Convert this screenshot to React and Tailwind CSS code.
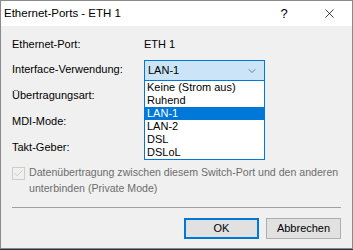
import { Check, ChevronDown, X } from "lucide-react";

const options = ["Keine (Strom aus)", "Ruhend", "LAN-1", "LAN-2", "DSL", "DSLoL"];

export default function App() {
    return (
        <div className="w-[353px] h-[250px] bg-[#2b2f3a] overflow-hidden" style={{ fontFamily: '"Liberation Sans", Arial, sans-serif' }}>
            <div className="w-[353px] h-[249px] bg-[#f0f0f0] border border-[#8a8a8a] flex flex-col text-[11px] text-black">
                {/* Titelleiste */}
                <div className="h-[25px] bg-white flex items-center pl-[3px]">
                    <span className="text-[11.5px] flex-1">Ethernet-Ports - ETH 1</span>
                    <span className="w-[44px] text-center text-[13px]">?</span>
                    <span className="w-[46px] flex justify-center">
                        <X size={15} strokeWidth={1.2} />
                    </span>
                </div>

                <div className="relative flex-1 px-[11px]">
                    <div className="grid grid-cols-[132px_1fr] mt-[10px]">
                        <div className="h-[16px] leading-[16px]">Ethernet-Port:</div>
                        <div className="h-[16px] leading-[16px]">ETH 1</div>
                    </div>
                    <div className="flex flex-col gap-[10px] mt-[9px]">
                        <div className="h-[16px] leading-[16px]">Interface-Verwendung:</div>
                        <div className="h-[16px] leading-[16px]">Übertragungsart:</div>
                        <div className="h-[16px] leading-[16px]">MDI-Mode:</div>
                        <div className="h-[16px] leading-[16px]">Takt-Geber:</div>
                    </div>

                    {/* Checkbox (deaktiviert) */}
                    <div className="flex items-start gap-[4px] mt-[9px] text-[#6d6d6d]">
                        <div className="w-[13px] h-[13px] border border-[#cccccc] bg-[#f0f0f0] flex items-center justify-center mt-[3px] shrink-0">
                            <Check size={11} strokeWidth={1.5} className="text-[#bcbcbc]" />
                        </div>
                        <div className="leading-[16px] text-[10.6px] whitespace-nowrap">
                            Datenübertragung zwischen diesem Switch-Port und den anderen
                            <br />
                            unterbinden (Private Mode)
                        </div>
                    </div>

                    <div className="h-px bg-[#a0a0a0] mt-[11px]" />

                    <div className="flex justify-end gap-[7px] mt-[10px]">
                        <button className="w-[75px] h-[21px] border-2 border-[#0078d7] bg-[#e1e1e1]">OK</button>
                        <button className="w-[75px] h-[21px] border border-[#adadad] bg-[#e1e1e1]">Abbrechen</button>
                    </div>

                    {/* Aufgeklappte Auswahlliste */}
                    <div className="absolute left-[143px] top-[34px] w-[121px]">
                        <div className="h-[21px] border border-[#0078d7] bg-[#cce4f7] flex items-center pl-[3px] pr-[6px]">
                            <span className="flex-1">LAN-1</span>
                            <ChevronDown size={12} strokeWidth={1.3} className="text-[#444]" />
                        </div>
                        <div className="border border-t-0 border-[#0078d7] bg-white">
                            {options.map((o) => (
                                <div
                                    key={o}
                                    className={o === "LAN-1" ? "h-[13px] leading-[13px] pl-[2px] bg-[#0078d7] text-white" : "h-[13px] leading-[13px] pl-[2px]"}
                                >
                                    {o}
                                </div>
                            ))}
                        </div>
                    </div>
                </div>
            </div>
        </div>
    );
}
